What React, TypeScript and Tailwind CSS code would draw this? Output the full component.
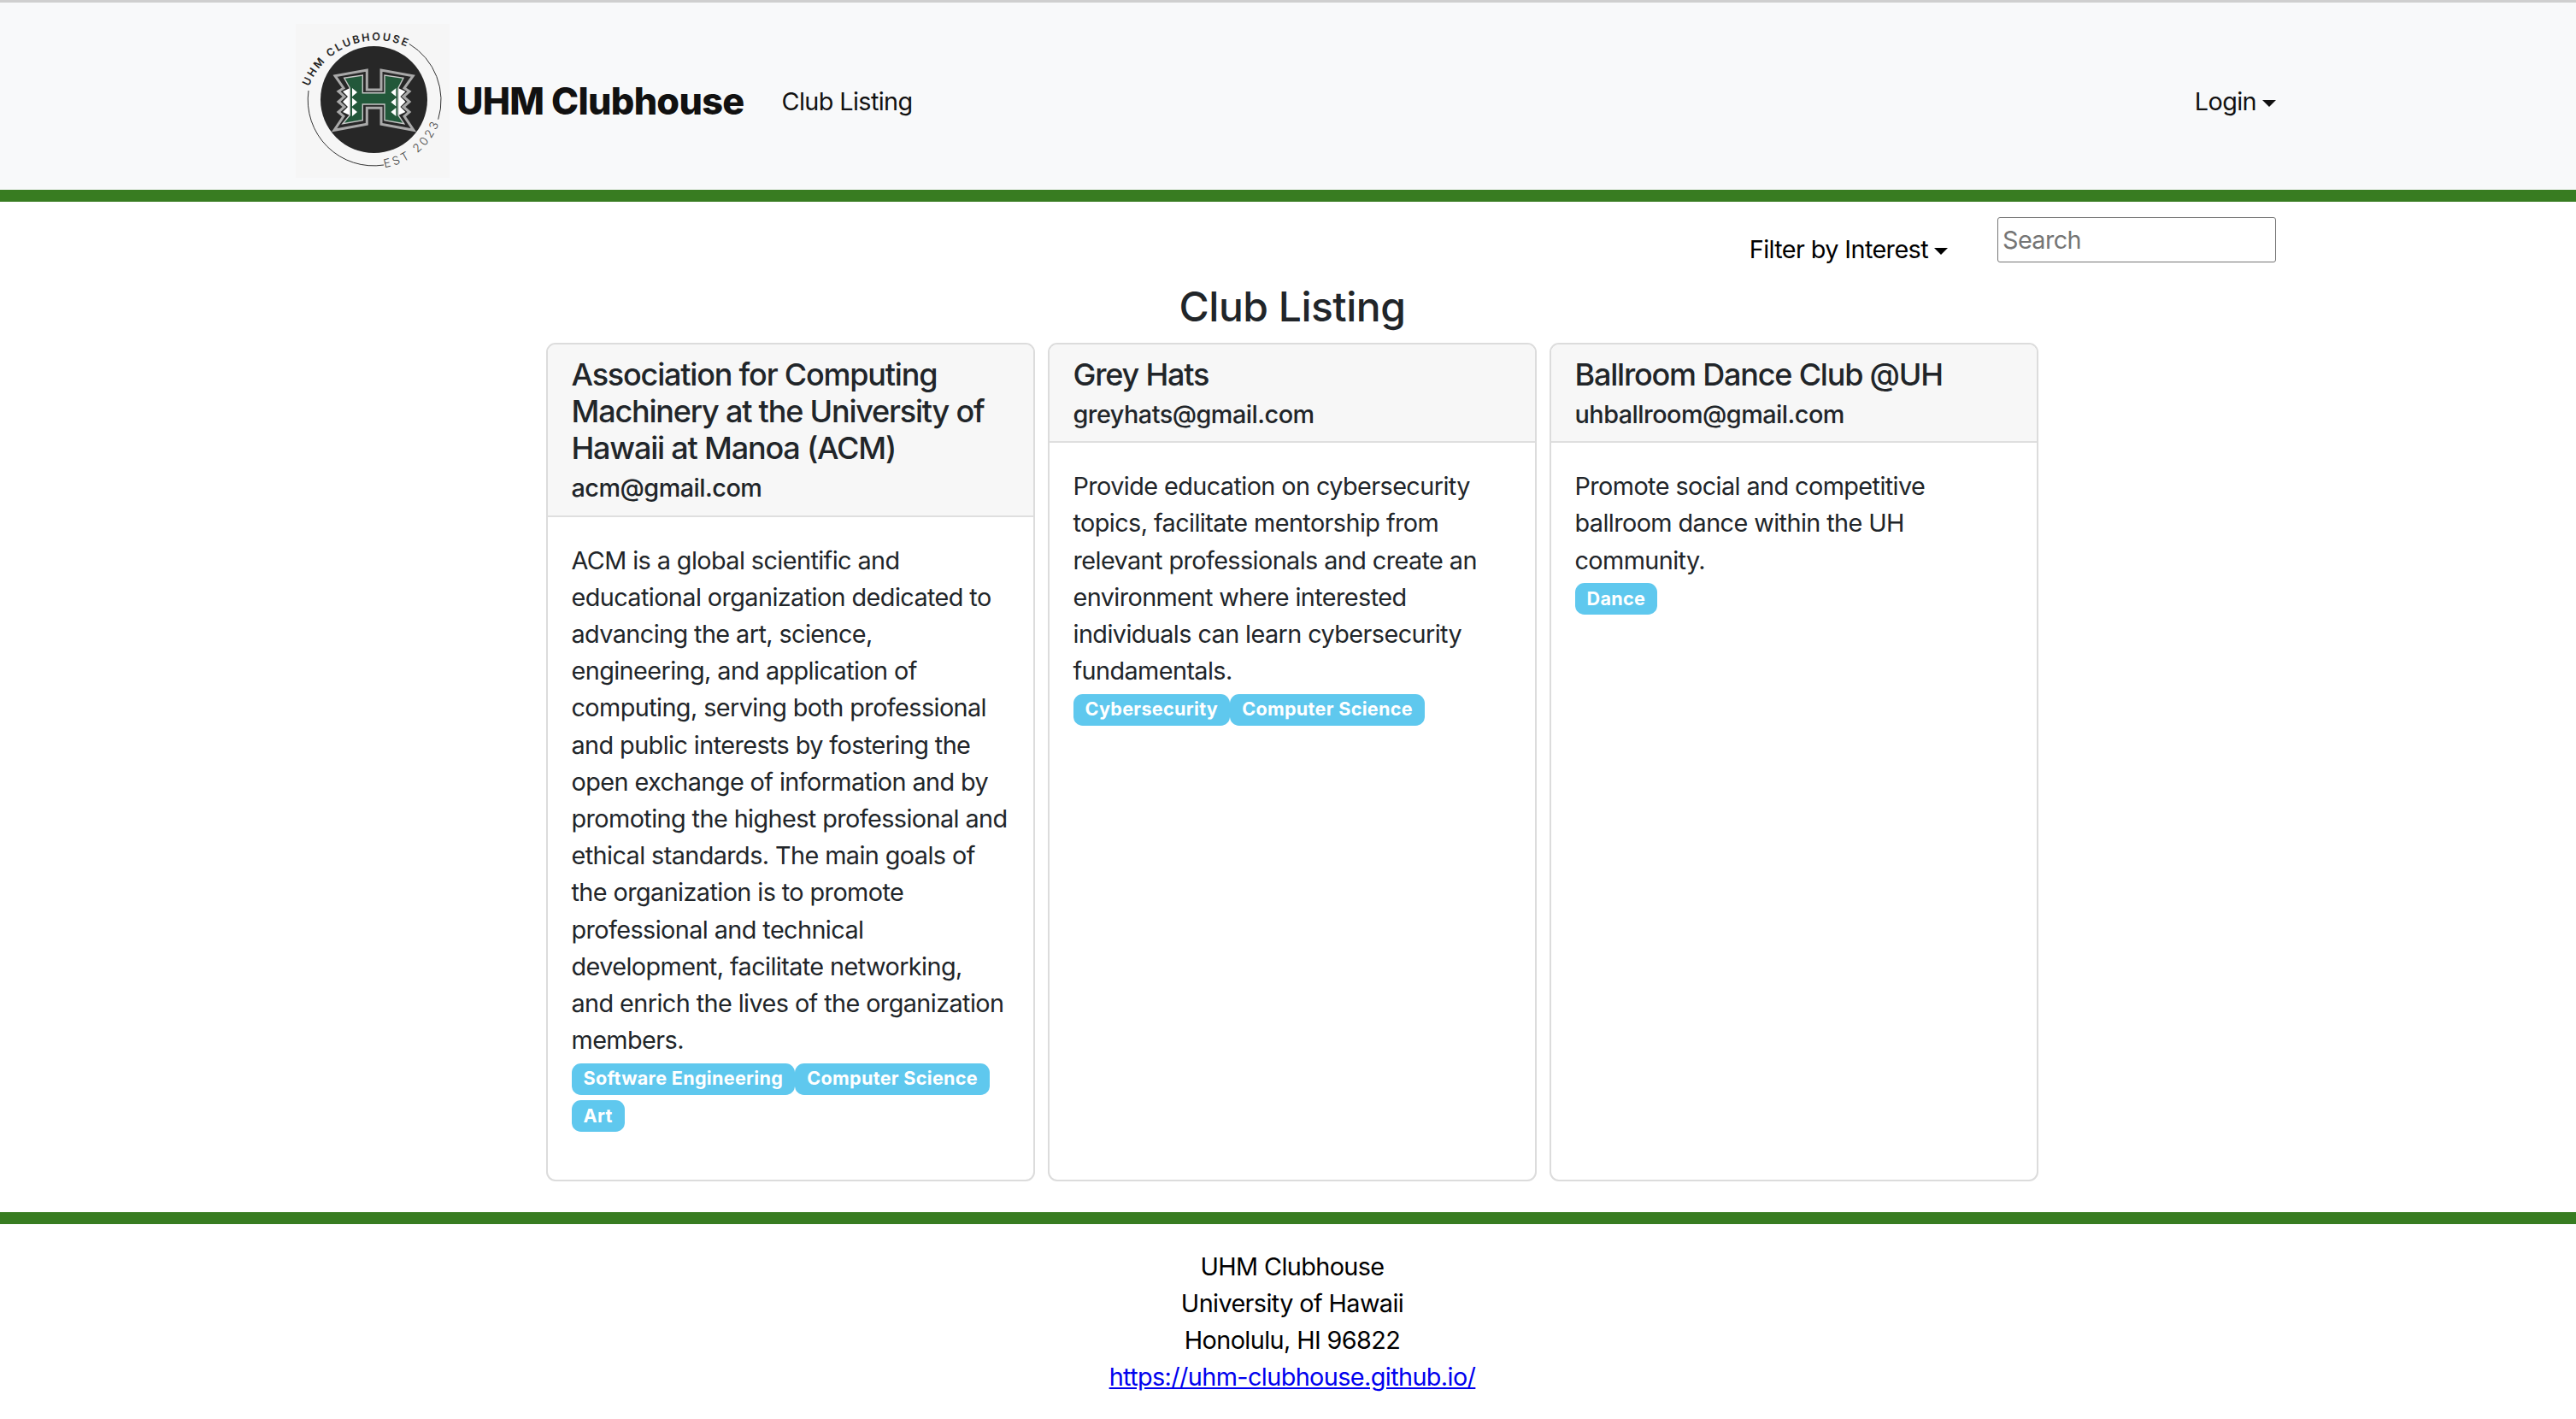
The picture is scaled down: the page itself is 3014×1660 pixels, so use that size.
const font = { fontFamily: "Inter, 'Liberation Sans', sans-serif" };

function Caret() {
  return <span className="ml-[7px] inline-block h-0 w-0 border-x-[8px] border-t-[8px] border-x-transparent border-t-current align-[4px]" />;
}

function Logo() {
  return (
    <svg width="180" height="180" viewBox="0 0 180 180" className="block shrink-0">
      <rect width="180" height="180" fill="#f6f6f6" />
      <circle cx="91.5" cy="88.5" r="62.5" fill="#272727" />
      <path d="M 132.7 23.3 A 77 77 0 0 1 166.7 111.7" fill="none" stroke="#333" strokeWidth="1" />
      <path d="M 15 78 A 77 77 0 0 0 103 165" fill="none" stroke="#333" strokeWidth="1" />
      <defs>
        <path id="topArc" d="M 15.5 73.2 A 85 85 0 0 1 131 27.5" />
        <path id="botArc" d="M 104 168 A 81 81 0 0 0 169 112" />
      </defs>
      <text fontFamily="Inter, sans-serif" fontSize="12.5" fontWeight="600" letterSpacing="2.2" fill="#222">
        <textPath href="#topArc">UHM CLUBHOUSE</textPath>
      </text>
      <text fontFamily="Inter, sans-serif" fontSize="13.5" fontWeight="300" letterSpacing="3.3" fill="#444">
        <textPath href="#botArc">EST 2023</textPath>
      </text>
      <path
        d="M46 60.7 L83.3 54 V77 H100 V54 L137.3 60.7 L127 75 L133 79 L126 85 L133 91 L126 97 L133 103 L127 108 L138 124.3 L100 117.3 V98.3 H83.3 V117.3 L45 124.3 L56 108 L50 103 L57 97 L50 91 L57 85 L50 79 L56 75 Z"
        fill="#272727"
        stroke="#a9a9a9"
        strokeWidth="3"
      />
      <path d="M63.5 75 L55 79 L61 85 L55 91 L61 97 L55 103 L63.5 107 Z M119.9 75 L128.4 79 L122.4 85 L128.4 91 L122.4 97 L128.4 103 L119.9 107 Z" fill="#fff" />
      <path
        d="M56.7 63.3 L78.3 60 V80.7 H104 V60 L126 63.3 L120 75 V106.7 L126.7 116.7 L104 112.7 V94 H78.3 V112.7 L55 116.7 L63.3 106.7 V75 Z"
        fill="#22583a"
        stroke="#c8c8c8"
        strokeWidth="1.4"
      />
      <path d="M66 75 L72 80 L66 85 Z M66 86.5 L72 91.5 L66 96.5 Z M66 98 L72 103 L66 108 Z M117.4 75 L111.4 80 L117.4 85 Z M117.4 86.5 L111.4 91.5 L117.4 96.5 Z M117.4 98 L111.4 103 L117.4 108 Z" fill="#fff" />
    </svg>
  );
}

function Badge({ children }: { children: string }) {
  return (
    <span className="inline-block rounded-[10.8px] bg-[#5fc8ee] px-[14px] py-[7.5px] align-baseline text-[21.6px] leading-[21.6px] font-bold tracking-[0.3px] text-white">
      {children}
    </span>
  );
}

function Card({ title, email, body, tags }: { title: string; email: string; body: string; tags: string[] }) {
  return (
    <div className="flex flex-col rounded-[11px] border-2 border-[#dcdcdc] bg-white">
      <div className="rounded-t-[9px] border-b-2 border-[#dfdfdf] bg-[#f7f7f7] px-[27.5px] pt-[14px] pb-[10px]">
        <div className="text-[36px] leading-[43.2px] font-medium tracking-[-1.2px] text-[#212529]">{title}</div>
        <div className="mt-[3px] text-[28.8px] leading-[43.2px] font-medium tracking-[-0.5px] text-[#212529]">{email}</div>
      </div>
      <div className="px-[27.5px] pt-[29px] pb-[27.8px] text-[28.8px] leading-[43.2px] tracking-[-0.58px] text-[#212529]">
        <div>{body}</div>
        <div className="-mt-[1px]">
          {tags.map((t) => (
            <Badge key={t}>{t}</Badge>
          ))}
        </div>
      </div>
    </div>
  );
}

export default function App() {
  return (
    <div style={font} className="flex flex-col overflow-hidden bg-white text-[28.8px] leading-[43.2px] tracking-[-0.6px] text-black">
      <nav className="flex h-[222px] items-center border-t-[3px] border-[#cfcfcf] bg-[#f8f9fa] pt-[10px] pr-[351px] pl-[346px]">
        <Logo />
        <span className="ml-[8px] text-[43.2px] leading-[52px] font-extrabold tracking-[-0.7px] text-[#111]">UHM Clubhouse</span>
        <a className="mt-[2px] ml-[44px] text-[#111]">Club Listing</a>
        <a className="mt-[2px] ml-auto text-[#111]">
          Login
          <Caret />
        </a>
      </nav>
      <div className="h-[14px] bg-[#387c21]" />
      <main className="flex flex-col">
        <div className="flex items-start justify-end pt-[18px] pr-[351px]">
          <span className="mt-[16px]">
            Filter by Interest
            <Caret />
          </span>
          <input
            placeholder="Search"
            className="ml-[58px] h-[53px] w-[326px] rounded-[3px] border border-[#767676] bg-white px-[5px] text-[28.8px] placeholder:text-[#757575]"
          />
        </div>
        <h1 className="mt-[17px] pl-[10px] text-center text-[48px] leading-[57.6px] font-medium tracking-[-0.5px] text-[#212529]">Club Listing</h1>
        <div className="mt-[13px] ml-[639px] grid h-[981px] w-[1746px] grid-cols-3 gap-[15px]">
          <Card
            title="Association for Computing Machinery at the University of Hawaii at Manoa (ACM)"
            email="acm@gmail.com"
            body="ACM is a global scientific and educational organization dedicated to advancing the art, science, engineering, and application of computing, serving both professional and public interests by fostering the open exchange of information and by promoting the highest professional and ethical standards. The main goals of the organization is to promote professional and technical development, facilitate networking, and enrich the lives of the organization members."
            tags={["Software Engineering", "Computer Science", "Art"]}
          />
          <Card
            title="Grey Hats"
            email="greyhats@gmail.com"
            body="Provide education on cybersecurity topics, facilitate mentorship from relevant professionals and create an environment where interested individuals can learn cybersecurity fundamentals."
            tags={["Cybersecurity", "Computer Science"]}
          />
          <Card
            title="Ballroom Dance Club @UH"
            email="uhballroom@gmail.com"
            body="Promote social and competitive ballroom dance within the UH community."
            tags={["Dance"]}
          />
        </div>
      </main>
      <div className="mt-[36px] h-[14px] bg-[#387c21]" />
      <footer className="pt-[28px] pb-[55px] pl-[10px] text-center">
        <div>UHM Clubhouse</div>
        <div>University of Hawaii</div>
        <div>Honolulu, HI 96822</div>
        <a className="text-[#0000ee] underline">https://uhm-clubhouse.github.io/</a>
      </footer>
    </div>
  );
}
